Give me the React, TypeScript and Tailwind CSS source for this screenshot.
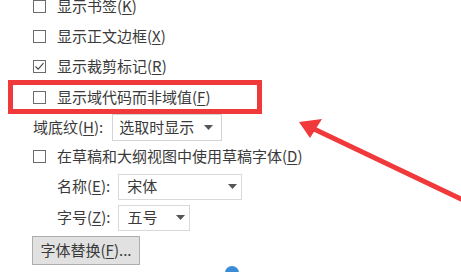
import React from "react";

const font = { fontFamily: '"Noto Sans CJK SC", "Noto Sans", sans-serif' };

function Box({ checked = false }: { checked?: boolean }) {
  return (
    <div className="w-[13px] h-[13px] border border-[#6b6b6b] bg-white flex items-center justify-center shrink-0">
      {checked && (
        <svg width="11" height="11" viewBox="0 0 11 11">
          <path d="M1.5 5.5 L4.2 8.2 L9.5 2.2" fill="none" stroke="#444" strokeWidth="1.1" />
        </svg>
      )}
    </div>
  );
}

function Key({ k }: { k: string }) {
  return (
    <>
      (<span className="underline underline-offset-2 decoration-1">{k}</span>)
    </>
  );
}

function CheckRow({ label, k, checked, h }: { label: string; k: string; checked?: boolean; h: string }) {
  return (
    <div className={`flex items-center pl-[33px] gap-[11px] ${h}`}>
      <Box checked={checked} />
      <span>
        {label}
        <Key k={k} />
      </span>
    </div>
  );
}

function Caret() {
  return (
    <svg width="9" height="5" viewBox="0 0 9 5">
      <path d="M0 0 L9 0 L4.5 5 Z" fill="#555" />
    </svg>
  );
}

export default function App() {
  return (
    <div className="relative w-[461px] h-[272px] bg-white overflow-hidden text-[15px] text-[#3a3a3a]" style={font}>
      <div className="flex flex-col -mt-[9px]">
        <CheckRow label="显示书签" k="K" h="h-[30px]" />
        <CheckRow label="显示正文边框" k="X" h="h-[30px]" />
        <CheckRow label="显示裁剪标记" k="R" checked h="h-[31px]" />
        <CheckRow label="显示域代码而非域值" k="F" h="h-[30px]" />
        <div className="flex items-center h-[30px] pl-[33px] gap-[9px]">
          <span>
            域底纹<Key k="H" />:
          </span>
          <div className="w-[110px] h-[27px] border border-[#d4d4d4] flex items-center justify-between pl-[6px] pr-[8px]">
            <span>选取时显示</span>
            <Caret />
          </div>
        </div>
        <CheckRow label="在草稿和大纲视图中使用草稿字体" k="D" h="h-[29px]" />
        <div className="flex items-center h-[31px] pl-[57px] gap-[8px]">
          <span>
            名称<Key k="E" />:
          </span>
          <div className="w-[124px] h-[26px] border border-[#d9d9d9] flex items-center justify-between pl-[8px] pr-[4px]">
            <span>宋体</span>
            <Caret />
          </div>
        </div>
        <div className="flex items-center h-[31px] pl-[57px] gap-[8px]">
          <span>
            字号<Key k="Z" />:
          </span>
          <div className="w-[72px] h-[26px] border border-[#d9d9d9] flex items-center justify-between pl-[8px] pr-[4px]">
            <span>五号</span>
            <Caret />
          </div>
        </div>
        <div className="flex items-center h-[34px] pl-[32px]">
          <div className="w-[108px] h-[29px] border border-[#adadad] bg-[#e1e1e1] flex items-center justify-center">
            <span>
              字体替换<Key k="F" />...
            </span>
          </div>
        </div>
      </div>

      <div className="absolute left-[8px] top-[80px] w-[254px] h-[34px] border-[5px] border-[#f0393b]" />
      <div className="absolute left-[225px] top-[266px] w-[14px] h-[14px] rounded-full bg-[#3b8bd6]" />

      <svg className="absolute left-0 top-0" width="461" height="272" viewBox="0 0 461 272">
        <path d="M461 199 L314 129" stroke="#f0393b" strokeWidth="5" strokeLinecap="round" />
        <path d="M299 122 L322 119 L310 138 Z" fill="#f0393b" />
      </svg>
    </div>
  );
}
